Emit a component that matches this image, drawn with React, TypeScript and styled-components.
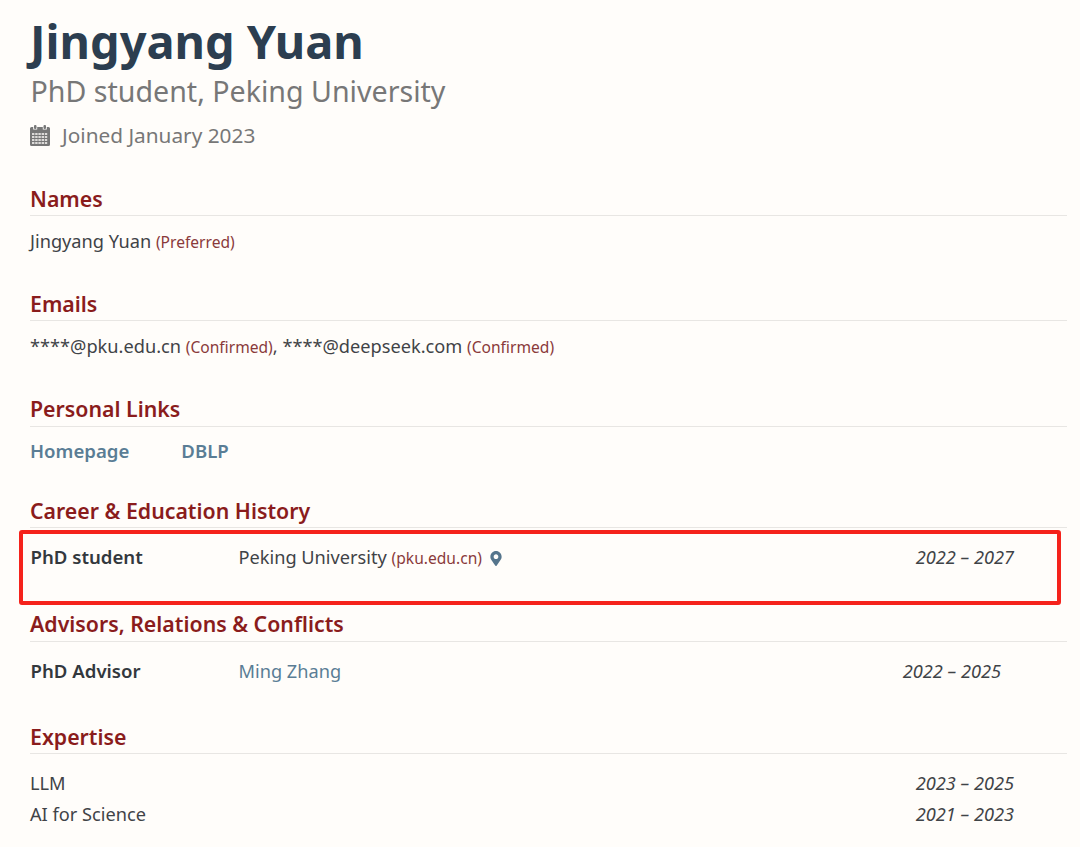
import styled, {createGlobalStyle} from 'styled-components';
import {FaMapMarkerAlt} from 'react-icons/fa';

const GlobalStyle = createGlobalStyle`
  html, body {
    margin: 0;
    padding: 0;
    background-color: #fffdfa;
    font-family: "Noto Sans", "Open Sans", sans-serif;
    color: #3f4347;
  }
`;

const Page = styled.div`
  position: relative;
  height: 847px;
  overflow: hidden;
  box-sizing: border-box;
  padding: 10px 13px 0 30px;
`;

const Name = styled.h1`
  margin: 0;
  font-size: 46.9px;
  line-height: 62px;
  font-weight: 700;
  color: #2c3e50;
`;

const Role = styled.div`
  margin-left: 0.5px;
  font-size: 28.6px;
  line-height: 38px;
  color: #777;
`;

const Joined = styled.div`
  display: flex;
  align-items: center;
  gap: 12px;
  margin-top: 10px;
  margin-bottom: 34px;
  font-size: 20.8px;
  line-height: 30px;
  color: #777;
`;

const Section = styled.section<{$gap?: number}>`
  margin-bottom: ${({$gap}) => $gap ?? 31}px;
`;

const Heading = styled.h2<{$pad?: number}>`
  margin: 0;
  padding-bottom: ${({$pad}) => $pad ?? 1}px;
  border-bottom: 1px solid #e8e6e3;
  font-size: 21.3px;
  line-height: 30px;
  font-weight: 600;
  color: #8a1c1c;
`;

const Body = styled.div<{$top?: number}>`
  padding-top: ${({$top}) => $top ?? 10}px;
  font-size: 18.2px;
  line-height: 31px;
`;

const Note = styled.span`
  font-size: 15.6px;
  color: #8a3a3a;
`;

const Links = styled.div`
  display: flex;
  gap: 52px;
  padding-top: 8px;
  font-size: 18.6px;
  line-height: 31px;
  font-weight: 600;
  color: #5a7d95;
`;

const Row = styled.div<{$dateEnd?: number}>`
  display: grid;
  grid-template-columns: 208.5px 1fr max-content;
  padding-right: ${({$dateEnd}) => $dateEnd ?? 53}px;
`;

const Title = styled.span`
  margin-left: 0.5px;
  font-size: 18.6px;
  line-height: 30px;
  font-weight: 600;
  color: #33383d;
`;

const Place = styled.span`
  display: flex;
  align-items: center;
  gap: 7px;
`;

const PersonLink = styled.span`
  color: #5a7d95;
`;

const Pin = styled(FaMapMarkerAlt)`
  width: 12px;
  height: 15px;
  margin-left: 1px;
  color: #55758c;
`;

const Years = styled.span`
  font-style: italic;
`;

const Highlight = styled.div`
  position: absolute;
  left: 19px;
  top: 530px;
  width: 1042px;
  height: 75px;
  box-sizing: border-box;
  border: 4px solid #f5221b;
  border-radius: 3px;
`;

const CalendarIcon = () => (
  <svg width="20" height="21" viewBox="0 0 20 21" fill="#777" aria-hidden="true">
    <rect x="4" y="0" width="2.5" height="4" rx="1" />
    <rect x="13.5" y="0" width="2.5" height="4" rx="1" />
    <path d="M1.5 2H3.2V4.5H7.2V2H12.8V4.5H16.8V2H18.5A1.5 1.5 0 0 1 20 3.5V19.5A1.5 1.5 0 0 1 18.5 21H1.5A1.5 1.5 0 0 1 0 19.5V3.5A1.5 1.5 0 0 1 1.5 2Z" />
    <g fill="#fffdfa" opacity="0.75">
      {[2, 5.2, 8.4, 11.6, 14.8].map((x) =>
        [8, 11, 14, 17].map((y) => <rect key={`${x}-${y}`} x={x} y={y} width="2.4" height="2" />),
      )}
    </g>
  </svg>
);

const App = (): JSX.Element => {
  return (
    <Page>
      <GlobalStyle />
      <Name>Jingyang Yuan</Name>
      <Role>PhD student, Peking University</Role>
      <Joined>
        <CalendarIcon />
        Joined January 2023
      </Joined>

      <Section>
        <Heading>Names</Heading>
        <Body>
          Jingyang Yuan <Note>(Preferred)</Note>
        </Body>
      </Section>

      <Section>
        <Heading>Emails</Heading>
        <Body>
          ****@pku.edu.cn <Note>(Confirmed)</Note>, ****@deepseek.com <Note>(Confirmed)</Note>
        </Body>
      </Section>

      <Section $gap={30}>
        <Heading $pad={2}>Personal Links</Heading>
        <Links>
          <span>Homepage</span>
          <span>DBLP</span>
        </Links>
      </Section>

      <Section $gap={35}>
        <Heading>Career &amp; Education History</Heading>
        <Body $top={14}>
          <Row>
            <Title>PhD student</Title>
            <Place>
              <span>
                Peking University <Note>(pku.edu.cn)</Note>
              </span>
              <Pin />
            </Place>
            <Years>2022 – 2027</Years>
          </Row>
        </Body>
      </Section>

      <Section $gap={35}>
        <Heading $pad={2}>Advisors, Relations &amp; Conflicts</Heading>
        <Body $top={14}>
          <Row $dateEnd={66}>
            <Title>PhD Advisor</Title>
            <PersonLink>Ming Zhang</PersonLink>
            <Years>2022 – 2025</Years>
          </Row>
        </Body>
      </Section>

      <Section>
        <Heading>Expertise</Heading>
        <Body $top={14}>
          <Row>
            <span>LLM</span>
            <span />
            <Years>2023 – 2025</Years>
          </Row>
          <Row>
            <span>AI for Science</span>
            <span />
            <Years>2021 – 2023</Years>
          </Row>
        </Body>
      </Section>

      <Highlight />
    </Page>
  );
};

export default App;
